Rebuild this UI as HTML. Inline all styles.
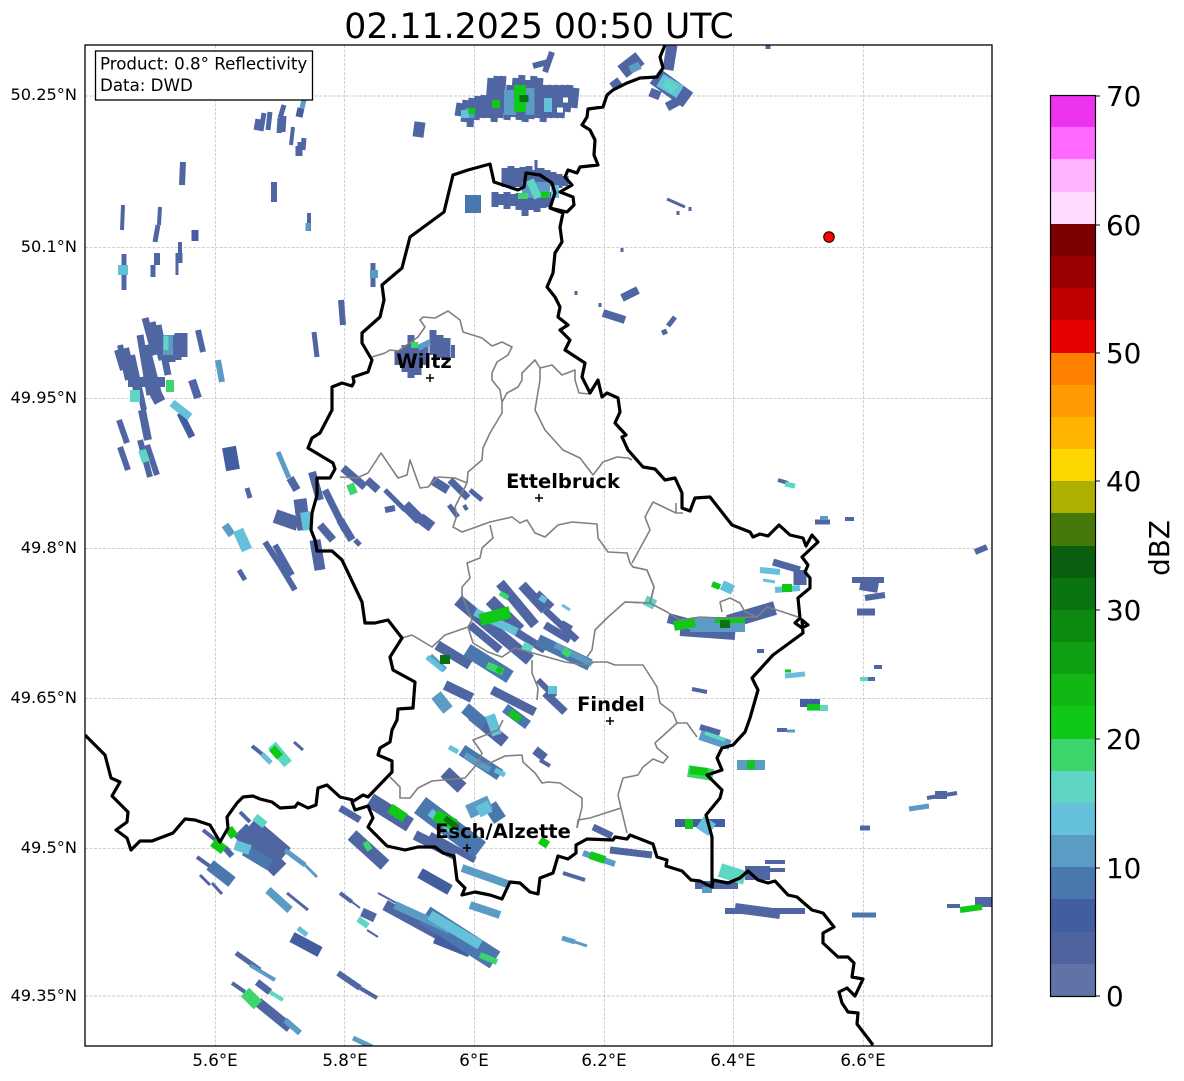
<!DOCTYPE html>
<html><head><meta charset="utf-8"><style>
html,body{margin:0;padding:0;background:#fff}
svg{display:block}
text{font-family:"DejaVu Sans",sans-serif;fill:#000}
.r path{fill:none;stroke-linecap:butt}
.a{stroke:#4f66a2}.b{stroke:#425ea0}.c{stroke:#4a78ae}.d{stroke:#5a9cc4}.e{stroke:#65c0d9}.f{stroke:#5fd6c4}.g{stroke:#3dd66d}.h{stroke:#10c816}.i{stroke:#0a7510}
</style></head><body>
<svg width="1184" height="1081" viewBox="0 0 1184 1081" xmlns="http://www.w3.org/2000/svg">
<rect width="1184" height="1081" fill="#fff"/>
<text x="539" y="38" font-size="34.7" text-anchor="middle">02.11.2025 00:50 UTC</text>
<clipPath id="m"><rect x="85" y="45" width="907" height="1001"/></clipPath>
<g stroke="#b8b8b8" stroke-width="0.7" stroke-dasharray="3 1.5" fill="none">
<path d="M215.3 45V1046M344.7 45V1046M474.7 45V1046M604.3 45V1046M733.3 45V1046M863.3 45V1046"/>
<path d="M85 96H992M85 247.3H992M85 398.3H992M85 548.3H992M85 698.3H992M85 848.3H992M85 996H992"/>
</g>
<g class="r" clip-path="url(#m)">
<g class="a">
<path stroke-width="5" d="M258 119L256 130M264 113L261 131M270 112L268 130M284 105L280 118M280 118L279 133M284 116L283 132"/>
<path stroke-width="6" d="M183 162L182 185M274 182V202M157 253V265M341 300L343 325M198 330L203 352M119 420L127 443"/>
<path stroke-width="4" d="M293 127L291 145M123 205L122 230M160 207L159 225M180 242V255M309 213V231"/>
<path stroke-width="5" d="M298 146V156M304 138L303 150M300 142V156M158 225L155 242M124 254V290M153 265V277M373 263V287M314 332L317 357M247 488L250 498"/>
<path stroke-width="7" d="M179 253V263"/><path stroke-width="3" d="M177 263V275"/>
<path stroke-width="11" d="M420 122L418 137"/>
<path stroke-width="7" d="M460 103L458 116M466 100L464 122M472 98L470 127M478 96L476 120M484 95L482 118M491 78L488 118M497 76L494 122M503 76L500 118M510 85L507 120M516 78L513 117M522 75L519 120M528 80L525 122M534 76L531 119M540 78L537 118M546 85L543 122M552 85L549 118M558 85L555 118M564 85L561 118M570 85L567 112M576 88L574 108"/>
<path stroke-width="6" d="M552 52L545 72M533 66L548 62"/>
<path stroke-width="7" d="M505 168V187M511 166V187M517 168V187M523 167V187M529 166V186M535 170V186M541 168V186M547 170V186M553 172V186M559 174V188M565 176V186M495 192V207M501 194V205M507 192V209M513 194V206M519 193V210M525 194V216M531 192V210M537 192V212M543 194V208M549 192V207"/>
<path stroke-width="3" d="M536 160V170M667 199L685 207"/>
<path stroke-width="3" d="M690 207V211M678 211V215M622 248V252M576 291V295M600 303V307"/>
<path stroke-width="15" d="M622 72L640 58"/>
<path stroke-width="18" d="M655 76L688 100"/>
<path stroke-width="9" d="M667 107L680 100M650 92L660 96M612 87L620 81"/>
<path stroke-width="11" d="M672 45L668 70"/>
<path stroke-width="5" d="M768 45V49M668 326L675 317M662 333L667 331"/>
<path stroke-width="8" d="M622 298L638 290M603 313L625 320"/>
<path stroke-width="7" d="M145 318L155 355M152 322L162 360M158 325L168 375M140 335L150 395M146 345L160 400"/>
<path stroke-width="6" d="M120 345L128 380M126 348L136 390M132 355L144 410M117 350L123 370"/>
<path stroke-width="7" d="M178 333V360M184 333V357M172 335V362M166 338V362"/><path stroke-width="10" d="M128 382H165"/><path stroke-width="12" d="M146 375L160 402"/>
<path stroke-width="8" d="M142 410L148 440M192 380L198 398"/>
<path stroke-width="6" d="M120 447L128 470M140 440L150 477M147 445L157 475"/>
<path stroke-width="8" d="M290 478L297 490"/>
<path stroke-width="14" d="M275 516L298 524"/>
<path stroke-width="13" d="M300 499L304 530"/>
<path stroke-width="8" d="M312 472L320 500M320 525L333 540M340 520L352 540M367 480L378 490M343 468L365 487"/>
<path stroke-width="7" d="M325 490L345 530"/>
<path stroke-width="5" d="M355 540L360 545M385 490L405 510M470 490L482 500M449 505L458 517M239 570L245 580"/>
<path stroke-width="6" d="M265 542L280 565M275 545L292 575M280 565L295 590M385 510L395 508"/>
<path stroke-width="11" d="M315 540L320 570M405 505L420 520M420 518L432 527"/>
<path stroke-width="9" d="M432 480L448 490"/><path stroke-width="7" d="M450 480L468 498"/><path stroke-width="4" d="M464 505L467 510"/>
<path stroke-width="10" d="M500 583L535 625"/>
<path stroke-width="10" d="M522 585L545 610"/>
<path stroke-width="7" d="M545 610L577 640"/>
<path stroke-width="12" d="M458 600L530 660M490 600L520 630"/>
<path stroke-width="8" d="M470 625L500 650M505 625L545 650M545 625L570 640"/>
<path stroke-width="7" d="M537 593L552 607"/>
<path stroke-width="4" d="M562 622L572 628M692 689L707 692M757 651H764"/>
<path stroke-width="10" d="M437 645L470 665"/>
<path stroke-width="9" d="M492 690L535 712"/>
<path stroke-width="6" d="M538 680L555 697"/><path stroke-width="8" d="M545 693L565 712"/>
<path stroke-width="12" d="M472 715L505 742"/>
<path stroke-width="10" d="M445 685L472 698"/>
<path stroke-width="13" d="M445 772L462 788"/>
<path stroke-width="9" d="M535 750L545 758"/><path stroke-width="4" d="M540 760L550 766"/>
<path stroke-width="7" d="M340 808L360 820M430 835L475 860M610 850L652 855"/>
<path stroke-width="10" d="M415 835L455 855"/>
<path stroke-width="13" d="M352 835L385 865"/>
<path stroke-width="15" d="M370 800L410 825"/>
<path stroke-width="7" d="M593 827L612 836"/>
<path stroke-width="4" d="M563 873L585 880M203 830L218 842"/>
<path stroke-width="18" d="M240 830L280 870M250 825L285 855"/>
<path stroke-width="4" d="M197 857L215 870M240 812L250 822"/>
<path stroke-width="3" d="M200 875L210 885M212 883L222 894M287 893L308 910M294 742L303 750"/>
<path stroke-width="6" d="M268 890L280 900M338 973L360 988M225 848L232 856"/>
<path stroke-width="4" d="M252 746L262 754M340 893L352 902M232 983L245 992M360 988L377 998"/>
<path stroke-width="9" d="M362 912L375 918"/><path stroke-width="2" d="M352 902L360 908M367 930L378 937M378 893L400 905"/>
<path stroke-width="11" d="M385 905L440 935"/>
<path stroke-width="5" d="M236 953L260 970"/>
<path stroke-width="10" d="M258 1002L290 1028"/><path stroke-width="7" d="M257 982L270 992"/>
<path stroke-width="10" d="M668 618L690 624"/><path stroke-width="14" d="M728 622L775 608"/><path stroke-width="8" d="M680 632L735 636"/>
<path stroke-width="7" d="M773 562L800 570"/><path stroke-width="13" d="M800 570V585"/>
<path stroke-width="4" d="M778 480L788 483M845 519H854"/>
<path stroke-width="5" d="M815 522L830 522"/><path stroke-width="6" d="M975 552L987 547"/>
<path stroke-width="6" d="M852 580L884 580M865 598L885 595"/><path stroke-width="10" d="M860 585L878 588"/>
<path stroke-width="7" d="M857 612H875"/>
<path stroke-width="4" d="M874 667H882M868 679H875M777 730H787M947 906H960"/>
<path stroke-width="6" d="M700 727L720 733"/>
<path stroke-width="14" d="M745 873H770"/><path stroke-width="4" d="M765 862H785M765 870H785"/>
<path stroke-width="8" d="M695 885H738"/>
<path stroke-width="6" d="M725 911L805 911"/><path stroke-width="10" d="M735 908L780 914"/>
<path stroke-width="5" d="M860 828H870"/>
<path stroke-width="4" d="M927 798L957 793"/><path stroke-width="8" d="M935 795H947"/>
<path stroke-width="10" d="M975 902H992"/>
<path stroke-width="7" d="M398 350V365M405 345V372M411 335V378M425 345V365M433 330V355M440 335V358M447 338V358M418 345V375"/><path stroke-width="4" d="M453 345V358"/>
</g>
<g class="b">
<path stroke-width="7" d="M299 117L301 108M195 230V241M180 413L192 437"/>
<path stroke-width="14" d="M229 447L233 470"/>
<path stroke-width="11" d="M420 873L450 890M435 938L470 952M292 937L320 952"/>
<path stroke-width="8" d="M800 703L820 703M675 823H725"/>
</g>
<g class="c">
<path stroke-width="16" d="M473 195V213"/>
<path stroke-width="12" d="M462 750L500 775M538 640L590 665"/>
<path stroke-width="14" d="M467 650L510 677"/>
<path stroke-width="12" d="M465 708L485 725M210 865L232 882M245 850L270 865"/>
<path stroke-width="10" d="M505 708L528 725"/>
<path stroke-width="20" d="M420 805L480 850M425 915L495 960"/>
<path stroke-width="14" d="M490 805L500 820"/>
<path stroke-width="5" d="M852 915H876"/>
</g>
<g class="d">
<path stroke-width="5" d="M302 108L304 100M278 452L289 478M308 223V231M562 938L575 942M285 850L305 865M909 809L929 806"/>
<path stroke-width="8" d="M374 270V278M225 525L232 535M462 868L510 885"/>
<path stroke-width="6" d="M418 348L430 342"/>
<path stroke-width="9" d="M470 108V118M530 88V115"/>
<path stroke-width="10" d="M168 335V355M700 735L730 745M737 765H765"/>
<path stroke-width="12" d="M436 695L448 710M510 90V115"/><path stroke-width="16" d="M522 190H550"/>
<path stroke-width="8" d="M630 70L640 65M395 905L450 930M470 905L500 915M268 890L290 910"/>
<path stroke-width="6" d="M218 360L222 382M430 656L445 670M583 853L615 864M702 890H712M555 645L592 664"/><path stroke-width="4" d="M250 965L275 980M820 518H828"/>
<path stroke-width="6" d="M285 1020L300 1033"/><path stroke-width="5" d="M353 1038L372 1047"/>
<path stroke-width="14" d="M690 625H745"/>
<path stroke-width="3" d="M305 865L317 877M575 942L587 946M787 731H795"/>
<path stroke-width="14" d="M468 812L490 802"/><path stroke-width="6" d="M465 755L490 770"/>
</g>
<g class="e">
<path stroke-width="10" d="M123 265V275M665 82L680 92M305 512L308 530M430 915L480 945"/>
<path stroke-width="8" d="M465 110V118M548 98V112M172 403L190 417M555 185V198M475 612L517 632M430 812L455 832"/>
<path stroke-width="14" d="M660 80L680 92"/>
<path stroke-width="11" d="M238 530L247 550"/>
<path stroke-width="10" d="M235 845L250 850M490 715L497 735"/>
<path stroke-width="5" d="M427 657L443 670M449 747L458 752M495 770L505 775M298 928L307 935M262 754L271 763M785 676L805 674"/>
<path stroke-width="6" d="M760 570L780 572M775 590L800 588M540 597L546 601"/>
<path stroke-width="3" d="M562 605L570 610M763 580L775 582"/>
<path stroke-width="14" d="M700 822L712 830"/>
<path stroke-width="10" d="M722 585L733 590"/>
<path stroke-width="12" d="M478 812L490 806"/><path stroke-width="8" d="M548 690H557"/>
</g>
<g class="f">
<path stroke-width="9" d="M665 82L675 90"/>
<path stroke-width="8" d="M530 180L538 198M142 450L146 462"/>
<path stroke-width="5" d="M166 336V350"/><path stroke-width="10" d="M135 390V402"/>
<path stroke-width="6" d="M358 919L368 926M807 708H828"/>
<path stroke-width="8" d="M255 817L265 825M523 645L532 650"/>
<path stroke-width="10" d="M272 745L288 764M645 600L655 605"/>
<path stroke-width="5" d="M785 484L795 486"/>
<path stroke-width="4" d="M270 992L283 1000M860 679H868"/>
<path stroke-width="14" d="M720 870L745 878"/>
<path stroke-width="4" d="M705 733L725 740"/>
</g>
<g class="g">
<path stroke-width="6" d="M518 196H528M411 345H418"/>
<path stroke-width="5" d="M500 593L508 598"/>
<path stroke-width="8" d="M350 484L354 494M170 380V392"/>
<path stroke-width="12" d="M245 992L258 1005M688 771L713 775"/>
<path stroke-width="7" d="M563 650L570 655M487 665L503 672"/>
<path stroke-width="6" d="M365 842L370 850M480 955L497 962"/>
</g>
<g class="h">
<path stroke-width="7" d="M472 108V114"/>
<path stroke-width="8" d="M496 100V108M545 192V198M782 588L792 588M272 748L280 757M590 855L605 860M690 770L708 772M540 840L548 845"/>
<path stroke-width="12" d="M520 85V112"/>
<path stroke-width="12" d="M480 620L510 612"/>
<path stroke-width="10" d="M213 842L224 850M228 835L235 830M390 808L405 818M674 626L695 622M685 824H693"/>
<path stroke-width="12" d="M435 815L455 825"/>
<path stroke-width="6" d="M497 668L502 672M712 584L720 587M715 620H745M960 910L982 907M807 707H820"/>
<path stroke-width="7" d="M510 712L520 720"/>
<path stroke-width="9" d="M747 765H755"/>
<path stroke-width="3" d="M785 671H791"/>
</g>
<g class="i">
<path stroke-width="9" d="M524 95V102"/>
<path stroke-width="10" d="M445 655V664M725 620V628"/>
<path stroke-width="6" d="M445 818L458 828"/>
</g>
<path stroke="#fff" stroke-width="5" d="M563 100H568M557 110H563"/>
</g>
<g fill="none" stroke="#808080" stroke-width="1.6" stroke-linejoin="round" clip-path="url(#m)">
<path d="M372 357L385 353L390 350L398 351L418 337L425 327L420 320L423 317L435 318L448 311L460 320L463 332L482 338L492 346L502 342L512 347L508 355L497 362L492 373L492 380L500 390L502 402L502 413L490 433L483 448L482 460L468 472L467 483L455 507L457 515L453 527L462 532L490 522L512 517L520 523L527 520L535 533L545 537L558 525L572 522L597 524L598 538L608 552L627 553L630 563L633 567L647 570L654 587L650 603L625 602L607 618L595 630L592 650L587 657"/>
<path d="M502 402L507 393L518 387L522 380L522 373L535 360L540 368L552 365L562 375L575 370L575 380L579 393L590 394"/>
<path d="M540 368V380L535 410L545 430L563 450L580 458L593 475L603 462L617 457L628 458L632 460"/>
<path d="M340 477L357 478L368 473L381 453L398 478L407 475L410 460L420 488L428 487L438 477L455 478L467 483"/>
<path d="M402 638L412 635L432 647L445 635L468 627L473 643M468 627L472 620L462 595L462 587L470 578L467 563L480 558L482 548L493 538L490 525"/>
<path d="M473 643L488 652L502 657L515 648L565 662L585 665L595 662L607 662L615 665L643 665L657 687L660 703L673 713L677 723L687 723L697 737"/>
<path d="M532 660L532 673L538 688L537 700"/>
<path d="M677 723L655 743L657 748L668 757L663 763L653 759L643 767L638 775L623 778L618 795L621 808L590 818L578 820L577 828M621 808L627 833"/>
<path d="M577 828L582 807L582 798L560 783L548 782L542 783L535 773L523 762L522 755L505 756L490 763L478 763L465 778L432 781L418 788L410 798L400 798L400 787L390 777"/>
<path d="M478 763L482 753L473 740L498 730L503 720"/>
<path d="M625 602L650 603L667 612L680 620L700 617L720 618L757 617L767 607L777 610L798 617"/>
<path d="M722 612L720 602L730 598L740 603L745 612L757 617"/>
<path d="M650 603L654 587L647 570L633 567"/>
<path d="M676 503V513H683M676 513L653 502L645 517L650 530L632 563"/>
</g>
<g fill="none" stroke="#000" stroke-width="3.2" stroke-linejoin="round" clip-path="url(#m)">
<path d="M665 45L660 57L663 68L657 77L640 78L627 83L613 90L607 95L603 107L588 109L587 117L582 125L590 130L595 140L594 155L598 165L580 167L577 173L568 170L565 177L572 185L560 192L573 197L574 205L567 212L550 208L555 193L552 183L540 175L526 173L524 187L518 190L494 182L490 164L468 170L453 175L444 212L410 237L402 268L382 285L384 300L380 317L362 333L362 343L372 360L368 372L353 377L354 382L352 386L342 383L332 387L332 410L320 433L312 438L308 448L333 463L335 469L330 478L317 478L317 495L312 513L311 530L315 540L317 551L332 551L342 560L362 602L365 623L375 623L388 620L402 638L390 657L393 670L415 682L413 708L398 709L397 720L392 730L390 742L380 748L378 755L392 761L392 772L368 797L363 795L352 802L355 810L368 806L373 818L368 827L387 846L405 850L418 847L435 847L443 853L454 856L457 880L465 888L462 895L475 892L490 895L502 899L510 882L520 883L530 892L538 894L540 878L553 873L558 856L568 859L576 853L576 845L587 839L613 840L615 837L627 839L630 835L653 844L657 857L667 860L666 866L682 871L691 880L700 881L712 887"/>
<path d="M550 208L563 213L560 227L562 242L555 253L553 273L547 287L555 297L560 307L558 317L568 325L560 330L570 340L565 350L585 363L582 377L590 393L598 380L602 397L607 393L618 398L620 412L615 423L626 435L622 437L628 450L643 467L655 469L665 480L675 478L682 493L682 508L690 511L695 498L710 497L732 525L750 532L753 537L760 534L768 536L779 525L790 535L803 538L806 546L812 535L818 542L802 557L808 565L805 572L810 578L810 588L798 598L800 618L795 623L802 628L808 625L802 620L803 633L773 655L752 678L758 690L750 718L745 732L733 745L722 748L717 758L722 770L707 775L722 790L720 798L706 815L712 837L712 887L713 880L728 883L740 878L748 871L758 880L768 883L775 881L788 895L797 897L812 910L823 913L834 927L823 933L823 943L838 957L848 957L854 963L852 977L863 979L855 996L847 988L839 992L842 1003L848 1012L858 1013L857 1024L873 1045"/>
<path d="M85 735L105 755L111 778L120 782L112 796L128 812L127 822L116 830L127 838L131 850L140 841L152 841L173 833L185 819L195 820L210 825L220 842L228 828L227 817L237 803L243 797L253 796L260 799L272 802L280 808L295 807L298 803L308 808L316 805L318 788L327 785L340 797L353 800"/>
</g>
<rect x="85" y="45" width="907" height="1001" fill="none" stroke="#000" stroke-width="1.3"/>
<rect x="95.5" y="51" width="217" height="49" fill="#fff" stroke="#000" stroke-width="1.3"/>
<text x="100" y="69.5" font-size="16.67">Product: 0.8° Reflectivity</text>
<text x="100" y="91" font-size="16.67">Data: DWD</text>
<g font-size="19.5" font-weight="bold" text-anchor="middle">
<text x="424" y="368">Wiltz</text>
<text x="563" y="488">Ettelbruck</text>
<text x="611" y="711">Findel</text>
<text x="503" y="838">Esch/Alzette</text>
</g>
<path d="M426 378H434M430 374V382M535 498H543M539 494V502M606 721H614M610 717V725M463 848H471M467 844V852" stroke="#000" stroke-width="1.5"/>
<circle cx="829" cy="237" r="5.3" fill="#ff0000" stroke="#000" stroke-width="1"/>
<g font-size="16.67" text-anchor="middle">
<text x="215" y="1066">5.6°E</text><text x="345" y="1066">5.8°E</text><text x="474" y="1066">6°E</text><text x="604" y="1066">6.2°E</text><text x="733" y="1066">6.4°E</text><text x="863" y="1066">6.6°E</text>
</g>
<g font-size="16.2" text-anchor="end">
<text x="77" y="100">50.25°N</text><text x="77" y="252">50.1°N</text><text x="77" y="403">49.95°N</text><text x="77" y="553">49.8°N</text><text x="77" y="703">49.65°N</text><text x="77" y="853">49.5°N</text><text x="77" y="1001">49.35°N</text>
</g>
<g shape-rendering="crispEdges">
<rect x="1051" y="964" width="44" height="32" fill="#6173a6"/>
<rect x="1051" y="932" width="44" height="32" fill="#4f649f"/>
<rect x="1051" y="899" width="44" height="33" fill="#425ea0"/>
<rect x="1051" y="867" width="44" height="32" fill="#4a78ae"/>
<rect x="1051" y="835" width="44" height="32" fill="#5a9cc4"/>
<rect x="1051" y="803" width="44" height="32" fill="#65c0d9"/>
<rect x="1051" y="771" width="44" height="32" fill="#5fd6c4"/>
<rect x="1051" y="739" width="44" height="32" fill="#3dd66d"/>
<rect x="1051" y="706" width="44" height="33" fill="#10c816"/>
<rect x="1051" y="674" width="44" height="32" fill="#10b715"/>
<rect x="1051" y="642" width="44" height="32" fill="#0f9f12"/>
<rect x="1051" y="610" width="44" height="32" fill="#0c8a10"/>
<rect x="1051" y="578" width="44" height="32" fill="#0a7510"/>
<rect x="1051" y="546" width="44" height="32" fill="#0a600f"/>
<rect x="1051" y="513" width="44" height="33" fill="#457a0a"/>
<rect x="1051" y="481" width="44" height="32" fill="#aeb000"/>
<rect x="1051" y="449" width="44" height="32" fill="#ffd700"/>
<rect x="1051" y="417" width="44" height="32" fill="#ffb400"/>
<rect x="1051" y="385" width="44" height="32" fill="#ff9b00"/>
<rect x="1051" y="353" width="44" height="32" fill="#ff7f00"/>
<rect x="1051" y="320" width="44" height="33" fill="#e60000"/>
<rect x="1051" y="288" width="44" height="32" fill="#bf0000"/>
<rect x="1051" y="256" width="44" height="32" fill="#9b0000"/>
<rect x="1051" y="224" width="44" height="32" fill="#7d0000"/>
<rect x="1051" y="192" width="44" height="32" fill="#ffdcff"/>
<rect x="1051" y="159" width="44" height="33" fill="#ffb4ff"/>
<rect x="1051" y="127" width="44" height="32" fill="#ff69ff"/>
<rect x="1051" y="95" width="44" height="32" fill="#ee33ee"/>
</g>
<rect x="1050.5" y="95.5" width="45" height="901" fill="none" stroke="#000" stroke-width="1.2"/>
<path d="M1095 96H1100M1095 225H1100M1095 353H1100M1095 481H1100M1095 610H1100M1095 739H1100M1095 868H1100M1095 996H1100" stroke="#000" stroke-width="1.1"/>
<g font-size="27.8">
<text x="1106" y="106">70</text><text x="1106" y="235">60</text><text x="1106" y="363">50</text><text x="1106" y="491">40</text><text x="1106" y="620">30</text><text x="1106" y="749">20</text><text x="1106" y="878">10</text><text x="1106" y="1006">0</text>
</g>
<text transform="translate(1169 548) rotate(-90)" font-size="27.8" text-anchor="middle">dBZ</text>
</svg>
</body></html>
